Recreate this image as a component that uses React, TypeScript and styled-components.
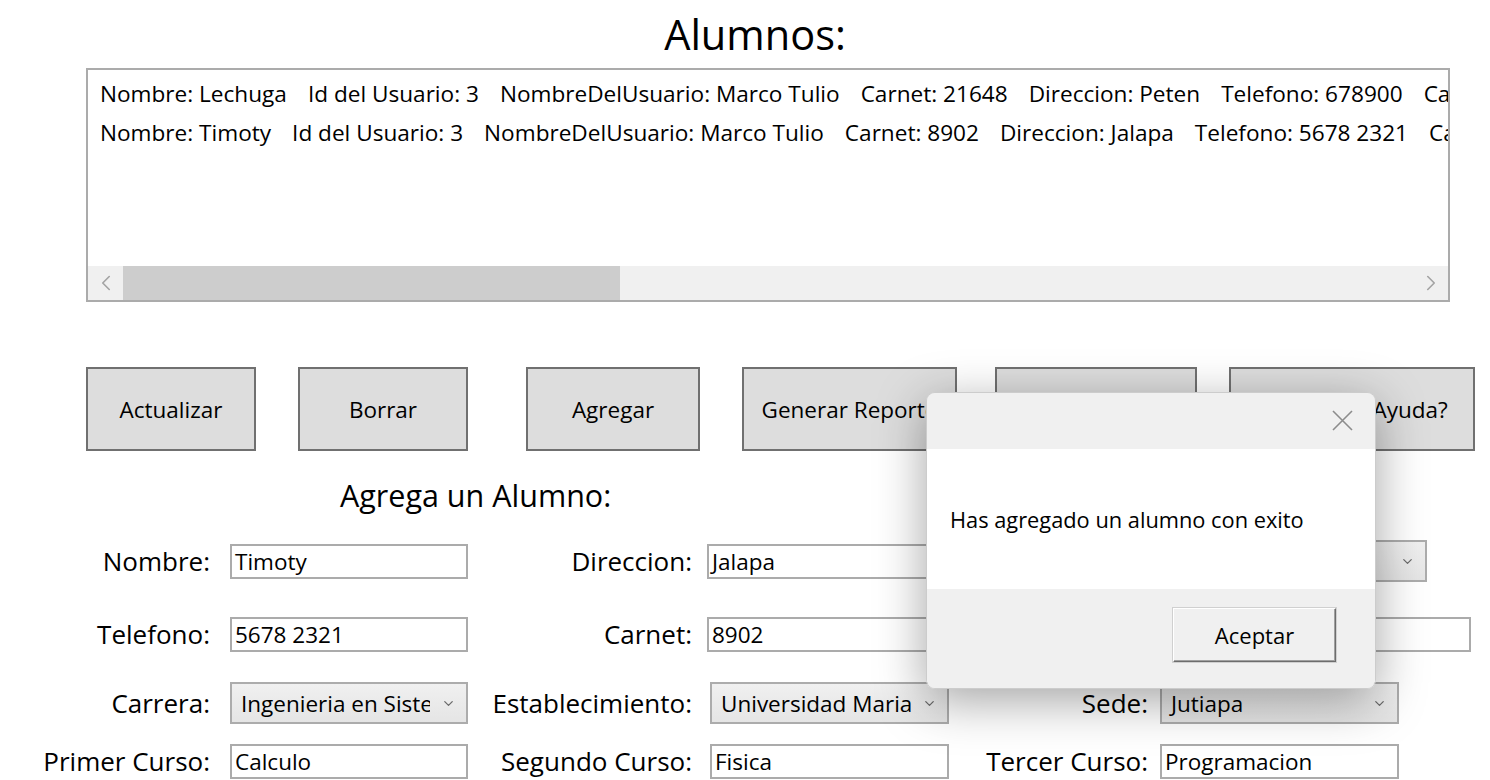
import React from 'react';
import styled, { createGlobalStyle } from 'styled-components';
import { ChevronDown, ChevronLeft, ChevronRight } from 'lucide-react';

const GlobalStyle = createGlobalStyle`
  body {
    margin: 0;
    background: #ffffff;
    font-family: 'Open Sans', 'Liberation Sans', sans-serif;
    color: #000000;
  }
`;

const Page = styled.div`
  position: relative;
  width: 1490px;
  height: 780px;
  overflow: hidden;
  background: #ffffff;
`;

const Title = styled.h1`
  margin: 0;
  height: 68px;
  padding-left: 20px;
  font-size: 41.5px;
  font-weight: 400;
  line-height: 68px;
  text-align: center;
`;

const ListBox = styled.div`
  display: flex;
  flex-direction: column;
  margin-left: 86px;
  width: 1364px;
  height: 234px;
  box-sizing: border-box;
  border: 2px solid #ababab;
  background: #ffffff;
`;

const ListItems = styled.div`
  flex: 1;
  overflow: hidden;
  padding: 4px 0 0 12px;
`;

const ListRow = styled.div`
  display: flex;
  height: 39px;
  align-items: center;
  white-space: nowrap;
  font-size: 22.6px;
`;

const Field = styled.span`
  margin-right: 21px;
`;

const HScroll = styled.div`
  display: flex;
  align-items: stretch;
  height: 34px;
  background: #f0f0f0;
`;

const ScrollArrow = styled.div`
  display: flex;
  align-items: center;
  justify-content: center;
  width: 35px;
  color: #a3a3a3;
`;

const ScrollTrack = styled.div`
  flex: 1;
  display: flex;
`;

const ScrollThumb = styled.div`
  width: 497px;
  background: #cdcdcd;
`;

const ButtonBar = styled.div`
  display: flex;
  margin-top: 65px;
  height: 84px;
`;

const ActionButton = styled.button<{ $left: number; $w: number }>`
  margin-left: ${(p) => p.$left}px;
  width: ${(p) => p.$w}px;
  height: 84px;
  box-sizing: border-box;
  border: 2px solid #707070;
  background: #dddddd;
  font-family: inherit;
  font-size: 22.5px;
  color: #000000;
  white-space: nowrap;
  overflow: hidden;
  padding: 0;
`;

const SectionTitle = styled.h2`
  margin: 26px 0 13px 340px;
  font-size: 30.5px;
  font-weight: 400;
  line-height: 36px;
`;

const FormGrid = styled.div`
  display: grid;
  grid-template-columns: 230px 238px 239px 242px 211px 330px;
  grid-template-rows: 70px 76px 62px 54px;
  align-items: center;
`;

const Label = styled.label<{ $pad: number }>`
  justify-self: end;
  padding-right: ${(p) => p.$pad}px;
  font-size: 26px;
  white-space: nowrap;
`;

const TextBox = styled.div<{ $w: number; $left?: number }>`
  display: flex;
  align-items: center;
  margin-left: ${(p) => p.$left ?? 0}px;
  width: ${(p) => p.$w}px;
  height: 35px;
  box-sizing: border-box;
  border: 2px solid #ababab;
  background: #ffffff;
  padding-left: 3px;
  font-size: 22.5px;
  white-space: nowrap;
  overflow: hidden;
`;

const Combo = styled.div<{ $w: number; $left?: number }>`
  display: flex;
  align-items: center;
  margin-left: ${(p) => p.$left ?? 0}px;
  width: ${(p) => p.$w}px;
  height: 42px;
  box-sizing: border-box;
  border: 2px solid #acacac;
  background: linear-gradient(#f0f0f0, #e5e5e5);
  font-size: 22.5px;
  white-space: nowrap;
`;

const ComboText = styled.span`
  flex: 1;
  overflow: hidden;
  padding-left: 9px;
`;

const ComboArrow = styled.span`
  display: flex;
  width: 36px;
  justify-content: center;
  color: #6a6a6a;
`;

const Dialog = styled.div`
  position: absolute;
  left: 926px;
  top: 392px;
  width: 450px;
  height: 297px;
  display: flex;
  flex-direction: column;
  border-radius: 9px;
  overflow: hidden;
  border: 1px solid #cccccc;
  box-sizing: border-box;
  box-shadow: 0 12px 50px rgba(0, 0, 0, 0.36);
`;

const DialogHeader = styled.div`
  display: flex;
  justify-content: flex-end;
  align-items: flex-start;
  height: 56px;
  background: #f0f0f0;
  padding: 17px 22px 0 0;
  box-sizing: border-box;
`;

const DialogBody = styled.div`
  display: flex;
  align-items: center;
  height: 140px;
  background: #ffffff;
  padding-left: 23px;
  font-size: 21.8px;
  white-space: nowrap;
`;

const DialogFooter = styled.div`
  flex: 1;
  display: flex;
  justify-content: flex-end;
  align-items: flex-start;
  background: #f0f0f0;
  padding: 19px 39px 0 0;
`;

const DialogButton = styled.button`
  width: 163px;
  height: 54px;
  box-sizing: border-box;
  background: #f0f0f0;
  border: 1px solid;
  border-color: #ffffff #6d6d6d #6d6d6d #ffffff;
  box-shadow: inset -1px -1px 0 #a0a0a0, 0 0 0 1px #d0d0d0;
  font-family: inherit;
  font-size: 22px;
  color: #000000;
`;

const CloseIcon = () => (
  <svg width="21" height="21" viewBox="0 0 21 21">
    <path d="M1 1 L20 20 M20 1 L1 20" stroke="#8c8c8c" strokeWidth="1.6" fill="none" />
  </svg>
);

const rows = [
  [
    'Nombre: Lechuga',
    'Id del Usuario: 3',
    'NombreDelUsuario: Marco Tulio',
    'Carnet: 21648',
    'Direccion: Peten',
    'Telefono: 678900',
    'Carrera: Ingenieria en Sistemas',
  ],
  [
    'Nombre: Timoty',
    'Id del Usuario: 3',
    'NombreDelUsuario: Marco Tulio',
    'Carnet: 8902',
    'Direccion: Jalapa',
    'Telefono: 5678 2321',
    'Carrera: Ingenieria en Sistemas',
  ],
];

const buttons = [
  { text: 'Actualizar', left: 86, w: 170 },
  { text: 'Borrar', left: 42, w: 170 },
  { text: 'Agregar', left: 58, w: 174 },
  { text: 'Generar Reporte', left: 42, w: 215 },
  { text: 'Salir', left: 38, w: 202 },
  { text: '¿Necesitas Ayuda?', left: 32, w: 246 },
];

const Arrow = () => (
  <ComboArrow>
    <ChevronDown size={15} strokeWidth={2} />
  </ComboArrow>
);

export default function App() {
  return (
    <Page>
      <GlobalStyle />
      <Title>Alumnos:</Title>
      <ListBox>
        <ListItems>
          {rows.map((r, i) => (
            <ListRow key={i}>
              {r.map((f) => (
                <Field key={f}>{f}</Field>
              ))}
            </ListRow>
          ))}
        </ListItems>
        <HScroll>
          <ScrollArrow>
            <ChevronLeft size={26} strokeWidth={1.5} />
          </ScrollArrow>
          <ScrollTrack>
            <ScrollThumb />
          </ScrollTrack>
          <ScrollArrow>
            <ChevronRight size={26} strokeWidth={1.5} />
          </ScrollArrow>
        </HScroll>
      </ListBox>

      <ButtonBar>
        {buttons.map((b) => (
          <ActionButton key={b.text} $left={b.left} $w={b.w}>
            {b.text}
          </ActionButton>
        ))}
      </ButtonBar>

      <SectionTitle>Agrega un Alumno:</SectionTitle>

      <FormGrid>
        <Label $pad={20}>Nombre:</Label>
        <TextBox $w={238}>Timoty</TextBox>
        <Label $pad={15}>Direccion:</Label>
        <TextBox $w={253}>Jalapa</TextBox>
        <Label $pad={12}>Edad:</Label>
        <Combo $w={267}>
          <ComboText></ComboText>
          <Arrow />
        </Combo>

        <Label $pad={20}>Telefono:</Label>
        <TextBox $w={238}>5678 2321</TextBox>
        <Label $pad={15}>Carnet:</Label>
        <TextBox $w={253}>8902</TextBox>
        <Label $pad={12}>Correo:</Label>
        <TextBox $w={311}></TextBox>

        <Label $pad={20}>Carrera:</Label>
        <Combo $w={238}>
          <ComboText>Ingenieria en Sistemas</ComboText>
          <Arrow />
        </Combo>
        <Label $pad={15}>Establecimiento:</Label>
        <Combo $w={239} $left={3}>
          <ComboText>Universidad Mariano Galvez</ComboText>
          <Arrow />
        </Combo>
        <Label $pad={12}>Sede:</Label>
        <Combo $w={239}>
          <ComboText>Jutiapa</ComboText>
          <Arrow />
        </Combo>

        <Label $pad={20}>Primer Curso:</Label>
        <TextBox $w={238}>Calculo</TextBox>
        <Label $pad={15}>Segundo Curso:</Label>
        <TextBox $w={239} $left={3}>Fisica</TextBox>
        <Label $pad={12}>Tercer Curso:</Label>
        <TextBox $w={239}>Programacion</TextBox>
      </FormGrid>

      <Dialog>
        <DialogHeader>
          <CloseIcon />
        </DialogHeader>
        <DialogBody>Has agregado un alumno con exito</DialogBody>
        <DialogFooter>
          <DialogButton>Aceptar</DialogButton>
        </DialogFooter>
      </Dialog>
    </Page>
  );
}
